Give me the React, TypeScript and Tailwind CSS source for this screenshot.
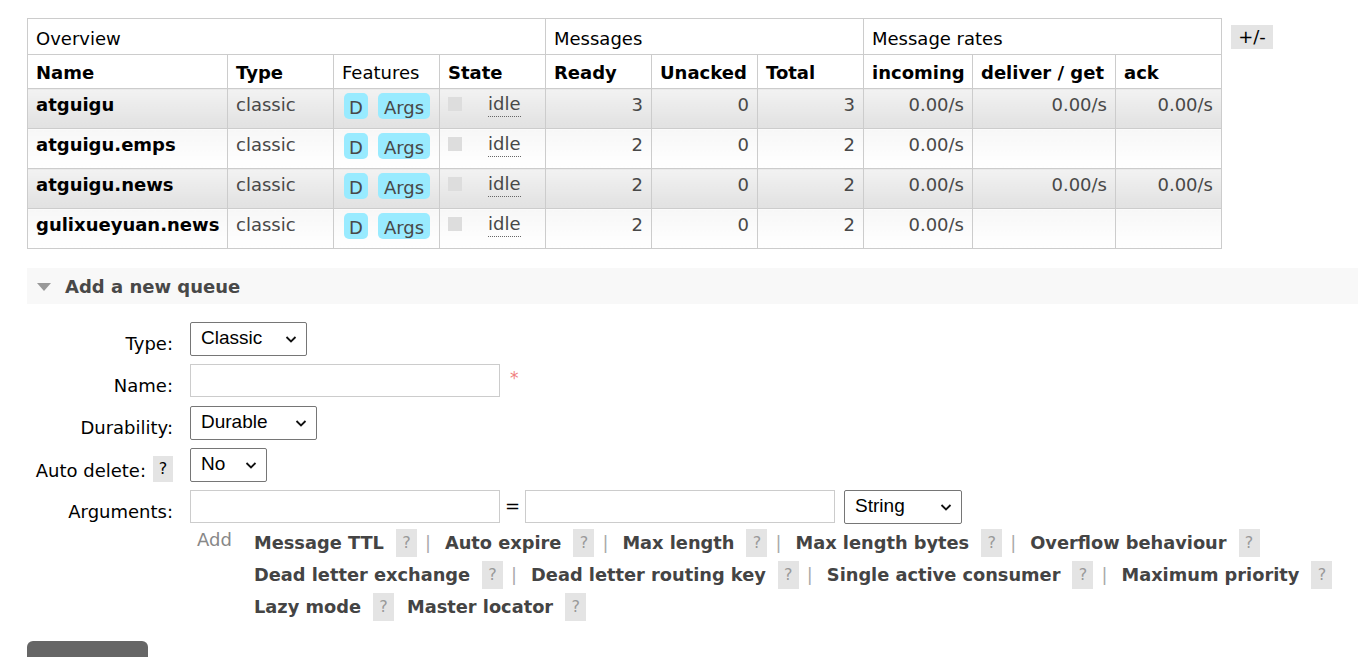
import React from 'react';

type Queue = {
  name: string;
  ready: number;
  unacked: number;
  total: number;
  incoming: string;
  deliver?: string;
  ack?: string;
};

const queues: Queue[] = [
  { name: 'atguigu', ready: 3, unacked: 0, total: 3, incoming: '0.00/s', deliver: '0.00/s', ack: '0.00/s' },
  { name: 'atguigu.emps', ready: 2, unacked: 0, total: 2, incoming: '0.00/s' },
  { name: 'atguigu.news', ready: 2, unacked: 0, total: 2, incoming: '0.00/s', deliver: '0.00/s', ack: '0.00/s' },
  { name: 'gulixueyuan.news', ready: 2, unacked: 0, total: 2, incoming: '0.00/s' },
];

const helpLines: string[][] = [
  ['Message TTL', 'Auto expire', 'Max length', 'Max length bytes', 'Overflow behaviour'],
  ['Dead letter exchange', 'Dead letter routing key', 'Single active consumer', 'Maximum priority'],
];

const font = { fontFamily: '"DejaVu Sans", Verdana, sans-serif' };

export default function App() {
  return (
    <div className="min-h-screen bg-white pl-[27px] pt-[18px] text-[18px] text-[#484848]" style={font}>
      {/* 队列表格 */}
      <div className="flex items-start gap-[9px]">
        <table className="table-fixed border-collapse w-[1194px]">
          <colgroup>
            <col className="w-[200px]" />
            <col className="w-[106px]" />
            <col className="w-[106px]" />
            <col className="w-[106px]" />
            <col className="w-[106px]" />
            <col className="w-[106px]" />
            <col className="w-[106px]" />
            <col className="w-[109px]" />
            <col className="w-[143px]" />
            <col className="w-[106px]" />
          </colgroup>
          <thead>
            <tr className="h-[36px] text-black">
              <th colSpan={4} className="border border-[#ccc] px-2 pt-[3px] text-left font-normal">Overview</th>
              <th colSpan={3} className="border border-[#ccc] px-2 pt-[3px] text-left font-normal">Messages</th>
              <th colSpan={3} className="border border-[#ccc] px-2 pt-[3px] text-left font-normal">Message rates</th>
            </tr>
            <tr className="h-[34px] text-black">
              <th className="border border-[#ccc] px-2 pt-[2px] text-left">Name</th>
              <th className="border border-[#ccc] px-2 pt-[2px] text-left">Type</th>
              <th className="border border-[#ccc] px-2 pt-[2px] text-left font-normal">Features</th>
              <th className="border border-[#ccc] px-2 pt-[2px] text-left">State</th>
              <th className="border border-[#ccc] px-2 pt-[2px] text-left">Ready</th>
              <th className="border border-[#ccc] px-2 pt-[2px] text-left">Unacked</th>
              <th className="border border-[#ccc] px-2 pt-[2px] text-left">Total</th>
              <th className="border border-[#ccc] px-2 pt-[2px] text-left">incoming</th>
              <th className="border border-[#ccc] px-2 pt-[2px] text-left">deliver / get</th>
              <th className="border border-[#ccc] px-2 pt-[2px] text-left">ack</th>
            </tr>
          </thead>
          <tbody>
            {queues.map((q, i) => {
              const bg = i % 2 === 0
                ? 'bg-gradient-to-b from-[#f2f2f2] to-[#e1e1e1]'
                : 'bg-gradient-to-b from-[#f7f7f7] to-[#ffffff]';
              const cell = `border border-[#ccc] px-2 pt-[3px] align-top leading-[26px] ${bg}`;
              return (
                <tr key={q.name} className="h-[40px]">
                  <td className={`${cell} font-bold text-black`}>{q.name}</td>
                  <td className={cell}>classic</td>
                  <td className={`${cell} !pt-[4px]`}>
                    <div className="flex gap-[10px] pl-[2px]">
                      <span className="h-[26px] rounded-[5px] bg-[#99ebff] px-[5px] leading-[29px]">D</span>
                      <span className="h-[26px] rounded-[5px] bg-[#99ebff] px-[6px] leading-[29px]">Args</span>
                    </div>
                  </td>
                  <td className={cell}>
                    <div className="flex items-start">
                      <span className="mt-[5px] h-[14px] w-[14px] bg-[#dddddd]" />
                      <span className="ml-[26px] border-b border-dotted border-[#666] leading-[24px]">idle</span>
                    </div>
                  </td>
                  <td className={`${cell} text-right`}>{q.ready}</td>
                  <td className={`${cell} text-right`}>{q.unacked}</td>
                  <td className={`${cell} text-right`}>{q.total}</td>
                  <td className={`${cell} text-right`}>{q.incoming}</td>
                  <td className={`${cell} text-right`}>{q.deliver ?? ''}</td>
                  <td className={`${cell} text-right`}>{q.ack ?? ''}</td>
                </tr>
              );
            })}
          </tbody>
        </table>
        <button className="mt-[7px] h-[24px] w-[42px] bg-[#e4e4e4] text-[18px] leading-[24px] text-black">+/-</button>
      </div>

      {/* 新建队列 */}
      <div className="mt-[19px] flex h-[36px] items-center bg-[#f8f8f8] pl-[10px] font-bold text-[#484848]">
        <span className="mt-[2px] h-0 w-0 border-x-[7px] border-t-[8px] border-x-transparent border-t-[#999]" />
        <span className="ml-[14px]">Add a new queue</span>
      </div>

      <div className="mt-[18px] grid grid-cols-[146px_auto] gap-x-[17px] gap-y-[8px] items-start">
        <Label text="Type:" />
        <div><Select value="Classic" width="w-[117px]" /></div>

        <Label text="Name:" />
        <div className="flex items-start">
          <input className="h-[33px] w-[310px] border border-[#ccc] bg-white" />
          <span className="ml-[10px] mt-[2px] text-[17px] leading-[24px] text-[#f08080]">*</span>
        </div>

        <Label text="Durability:" />
        <div><Select value="Durable" width="w-[127px]" /></div>

        <div className="-ml-[8px] flex h-[34px] justify-end pt-[8px] leading-[26px] text-black">
          <span className="pt-[2px]">Auto delete:</span>
          <span className="ml-[7px] flex h-[26px] w-[20px] items-center justify-center bg-[#e4e4e4] text-[16px]">?</span>
        </div>
        <div><Select value="No" width="w-[77px]" /></div>

        <Label text="Arguments:" />
        <div>
          <div className="flex items-start">
            <input className="h-[33px] w-[310px] border border-[#ccc] bg-white" />
            <span className="mx-[5px] mt-[4px] leading-[24px] text-black">=</span>
            <input className="h-[33px] w-[310px] border border-[#ccc] bg-white" />
            <div className="ml-[9px]"><Select value="String" width="w-[118px]" /></div>
          </div>
          <div className="mt-[5px] flex">
            <span className="ml-[7px] mt-[-2px] w-[57px] leading-[26px] text-[#888]">Add</span>
            <div className="flex flex-col gap-[4px] text-[17.8px]">
              {helpLines.map((line, li) => (
                <div key={li} className="flex h-[28px] items-center">
                  {line.map((h, hi) => (
                    <React.Fragment key={h}>
                      <span className="font-bold text-[#444]">{h}</span>
                      <Help />
                      {hi < line.length - 1 && <span className="ml-[8px] mr-[14px] text-[#aaa]">|</span>}
                    </React.Fragment>
                  ))}
                </div>
              ))}
              <div className="flex h-[28px] items-center">
                <span className="font-bold text-[#444]">Lazy mode</span>
                <Help />
                <span className="ml-[13px] font-bold text-[#444]">Master locator</span>
                <Help />
              </div>
            </div>
          </div>
        </div>
      </div>

      <div className="mt-[20px] h-[20px] w-[121px] rounded-t-[6px] bg-[#666]" />
    </div>
  );
}

function Label({ text }: { text: string }) {
  return <div className="h-[34px] pt-[10px] text-right leading-[24px] text-black">{text}</div>;
}

function Help() {
  return (
    <span className="ml-[12px] flex h-[28px] w-[21px] items-center justify-center bg-[#e4e4e4] text-[16px] font-normal text-[#999]">?</span>
  );
}

function Select({ value, width }: { value: string; width: string }) {
  return (
    <div
      className={`flex h-[34px] ${width} items-center justify-between rounded-[2px] border border-[#767676] bg-white pl-[10px] pr-[8px] text-[19px] text-black`}
      style={{ fontFamily: '"Liberation Sans", Arial, sans-serif' }}
    >
      <span className="mt-[-1px]">{value}</span>
      <svg width="14" height="14" viewBox="0 0 14 14" fill="none">
        <path d="M2.5 5 L7 9.5 L11.5 5" stroke="#111" strokeWidth="1.8" />
      </svg>
    </div>
  );
}
